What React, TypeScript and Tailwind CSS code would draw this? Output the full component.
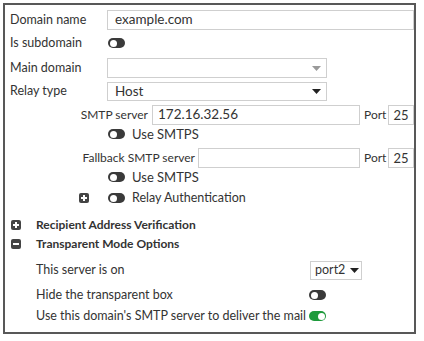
const font = { fontFamily: "Lato, 'Open Sans', sans-serif" };

const Toggle = ({ on = false }: { on?: boolean }) => (
  <div
    className={`relative w-[17px] h-[10px] rounded-full ${on ? "bg-[#1e9a3c]" : "bg-[#3a3a3a]"}`}
  >
    <div
      className={`absolute top-[1.5px] w-[7px] h-[7px] rounded-full bg-white ${on ? "right-[1.5px]" : "left-[1.5px]"}`}
    />
  </div>
);

const Caret = ({ light = false }: { light?: boolean }) => (
  <svg width="9" height="5" viewBox="0 0 9 5">
    <path d="M0 0 L9 0 L4.5 5 Z" fill={light ? "#9a9a9a" : "#222"} />
  </svg>
);

const BoxIcon = ({ plus = false }: { plus?: boolean }) => (
  <div className="relative w-[10px] h-[10px] rounded-[2px] bg-[#444]">
    <div className="absolute left-[2px] top-[4px] w-[6px] h-[2px] bg-white" />
    {plus && <div className="absolute left-[4px] top-[2px] w-[2px] h-[6px] bg-white" />}
  </div>
);

const App = () => {
  return (
    <div className="w-[424px] h-[341px] bg-white pt-[3px] pl-[3px]" style={font}>
      <div className="w-[413px] h-[331px] border-2 border-[#585858] text-[#333] text-[12.5px] leading-none">
        {/* Domain name */}
        <div className="flex items-center h-[20px] mt-[5px]">
          <div className="w-[102px] pl-[5px]">Domain name</div>
          <div className="flex items-center w-[307px] h-[20px] border border-[#cfcfcf] pl-[7px] text-[13.5px]">
            example.com
          </div>
        </div>
        {/* Is subdomain */}
        <div className="flex items-center h-[20px] mt-[3px]">
          <div className="w-[103px] pl-[5px]">Is subdomain</div>
          <Toggle />
        </div>
        {/* Main domain */}
        <div className="flex items-center h-[20px] mt-[5px]">
          <div className="w-[102px] pl-[5px]">Main domain</div>
          <div className="flex items-center justify-end w-[220px] h-[20px] border border-[#cfcfcf] pr-[5px]">
            <Caret light />
          </div>
        </div>
        {/* Relay type */}
        <div className="flex items-center h-[19px] mt-[4px]">
          <div className="w-[102px] pl-[5px]">Relay type</div>
          <div className="flex items-center justify-between w-[220px] h-[19px] border border-[#cfcfcf] pl-[7px] pr-[5px] text-[13.5px]">
            <span>Host</span>
            <Caret />
          </div>
        </div>
        {/* SMTP server */}
        <div className="flex items-center h-[20px] mt-[4px]">
          <div className="w-[143px] text-right text-[12px]">SMTP server</div>
          <div className="flex items-center w-[208px] h-[20px] ml-[4px] border border-[#cfcfcf] pl-[5px] text-[13.5px]">
            172.16.32.56
          </div>
          <div className="ml-[4px] w-[24px] text-[12px]">Port</div>
          <div className="flex items-center justify-center w-[26px] h-[20px] border border-[#cfcfcf] text-[13px]">
            25
          </div>
        </div>
        {/* Use SMTPS */}
        <div className="flex items-center h-[18px]">
          <div className="w-[103px]" />
          <Toggle />
          <span className="ml-[7px] text-[13px]">Use SMTPS</span>
        </div>
        {/* Fallback SMTP server */}
        <div className="flex items-center h-[20px] mt-[5px]">
          <div className="w-[190px] text-right text-[12px]">Fallback SMTP server</div>
          <div className="w-[162px] h-[20px] ml-[3px] border border-[#cfcfcf]" />
          <div className="ml-[4px] w-[24px] text-[12px]">Port</div>
          <div className="flex items-center justify-center w-[26px] h-[20px] border border-[#cfcfcf] text-[13px]">
            25
          </div>
        </div>
        {/* Use SMTPS */}
        <div className="flex items-center h-[18px]">
          <div className="w-[103px]" />
          <Toggle />
          <span className="ml-[7px] text-[13px]">Use SMTPS</span>
        </div>
        {/* Relay Authentication */}
        <div className="flex items-center h-[18px] mt-[3px]">
          <div className="w-[74px]" />
          <BoxIcon plus />
          <div className="w-[19px]" />
          <Toggle />
          <span className="ml-[7px]">Relay Authentication</span>
        </div>
        {/* Recipient Address Verification */}
        <div className="flex items-center h-[18px] mt-[9px] font-bold text-[12px]">
          <div className="w-[6px]" />
          <BoxIcon plus />
          <span className="ml-[15px]">Recipient Address Verification</span>
        </div>
        {/* Transparent Mode Options */}
        <div className="flex items-center h-[18px] mt-[1px] font-bold text-[12px]">
          <div className="w-[6px]" />
          <BoxIcon />
          <span className="ml-[15px]">Transparent Mode Options</span>
        </div>
        {/* This server is on */}
        <div className="flex items-center h-[19px] mt-[8px]">
          <div className="w-[305px] pl-[31px]">This server is on</div>
          <div className="flex items-center gap-[5px] w-[52px] h-[19px] border border-[#cfcfcf] pl-[4px] text-[12.5px]">
            <span>port2</span>
            <Caret />
          </div>
        </div>
        {/* Hide the transparent box */}
        <div className="flex items-center h-[18px] mt-[6px]">
          <div className="w-[304px] pl-[31px]">Hide the transparent box</div>
          <Toggle />
        </div>
        {/* Use this domain's SMTP server */}
        <div className="flex items-center h-[18px] mt-[3px]">
          <div className="w-[304px] pl-[31px]">Use this domain's SMTP server to deliver the mail</div>
          <Toggle on />
        </div>
      </div>
    </div>
  );
};

export default App;
